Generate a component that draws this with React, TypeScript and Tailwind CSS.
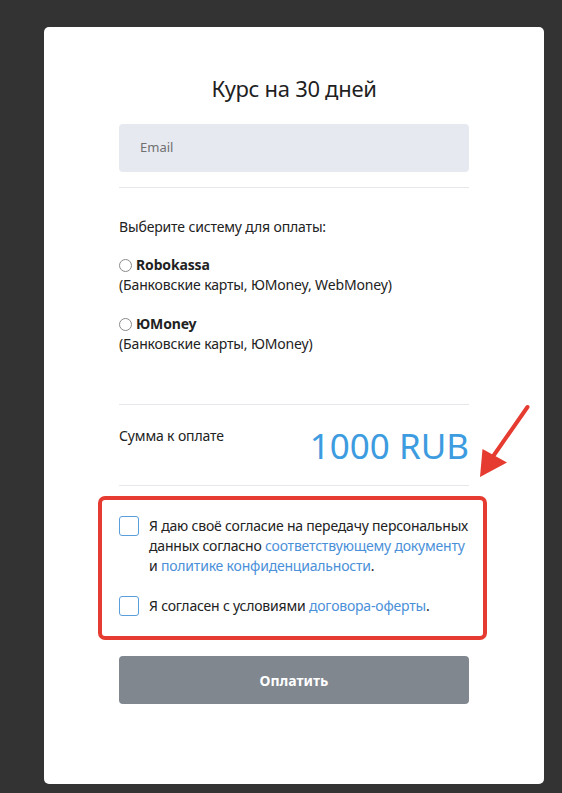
import React from "react";

export default function App() {
  return (
    <div
      className="relative min-h-[793px] w-full bg-[#333333] pt-[27px] pb-[9px]"
      style={{ fontFamily: '"Noto Sans", "Open Sans", sans-serif' }}
    >
      <div className="ml-[44px] h-[757px] w-[500px] rounded-[5px] bg-white pt-[46px]">
        <div className="mx-auto w-[350px] text-[#222222]">
          <h1 className="text-center text-[22px] leading-[30px] font-normal tracking-[-0.3px] text-[#1f1f1f]">
            Курс на 30 дней
          </h1>
          <div className="mt-[21px] flex h-[48px] items-center rounded-[4px] bg-[#e6e9f0] pl-[21px] text-[13px] text-[#707070]">
            Email
          </div>
          <div className="mt-[15px] h-px bg-[#e5e7eb]" />

          <p className="mt-[29px] text-[14px] leading-[20px] tracking-[-0.15px]">Выберите систему для оплаты:</p>

          <div className="mt-[18px] text-[14px] leading-[20px] tracking-[-0.15px]">
            <div className="flex items-center">
              <span className="mr-[4px] inline-block h-[13px] w-[13px] rounded-full border border-[#8a8a8a] bg-white" />
              <span className="font-bold">Robokassa</span>
            </div>
            <div>(Банковские карты, ЮMoney, WebMoney)</div>
          </div>

          <div className="mt-[19px] text-[14px] leading-[20px] tracking-[-0.15px]">
            <div className="flex items-center">
              <span className="mr-[4px] inline-block h-[13px] w-[13px] rounded-full border border-[#8a8a8a] bg-white" />
              <span className="font-bold">ЮMoney</span>
            </div>
            <div>(Банковские карты, ЮMoney)</div>
          </div>

          <div className="mt-[50px] h-px bg-[#e5e7eb]" />

          <div className="mt-[21px] flex items-start justify-between">
            <span className="text-[14px] leading-[20px] tracking-[-0.15px]">Сумма к оплате</span>
            <span className="text-[35px] leading-[40px] text-[#3d9be0]">1000 RUB</span>
          </div>

          <div className="mt-[19px] h-px bg-[#e5e7eb]" />

          <div className="relative pt-[30px] pb-[24px] text-[14px] leading-[20px]">
            <div className="pointer-events-none absolute top-[10px] right-[-18px] bottom-0 left-[-21px] rounded-[7px] border-4 border-[#e53b30]" />
            <div className="flex items-start gap-[10px]">
              <span className="inline-block h-[20px] w-[20px] shrink-0 rounded-[3px] border border-[#5a9fdc] bg-white" />
              <span className="whitespace-nowrap tracking-[-0.2px]">
                Я даю своё согласие на передачу персональных
                <br />
                данных согласно <span className="text-[#4a90d9]">соответствующему документу</span>
                <br />
                и <span className="text-[#4a90d9]">политике конфиденциальности</span>.
              </span>
            </div>
            <div className="mt-[20px] flex items-start gap-[10px]">
              <span className="inline-block h-[20px] w-[20px] shrink-0 rounded-[3px] border border-[#5a9fdc] bg-white" />
              <span className="tracking-[-0.2px]">
                Я согласен с условиями <span className="text-[#4a90d9]">договора-оферты</span>.
              </span>
            </div>
          </div>

          <button className="mt-[16px] flex h-[48px] w-full items-center justify-center rounded-[4px] bg-[#80878f] text-[14px] font-bold text-white">
            Оплатить
          </button>
        </div>
      </div>

      <svg
        className="pointer-events-none absolute top-0 left-0"
        width="562"
        height="793"
        viewBox="0 0 562 793"
      >
        <line x1="527.5" y1="407" x2="494" y2="455" stroke="#e53b30" strokeWidth="4" strokeLinecap="round" />
        <polygon points="480,477 482.5,449 507,462.5" fill="#e53b30" />
      </svg>
    </div>
  );
}
